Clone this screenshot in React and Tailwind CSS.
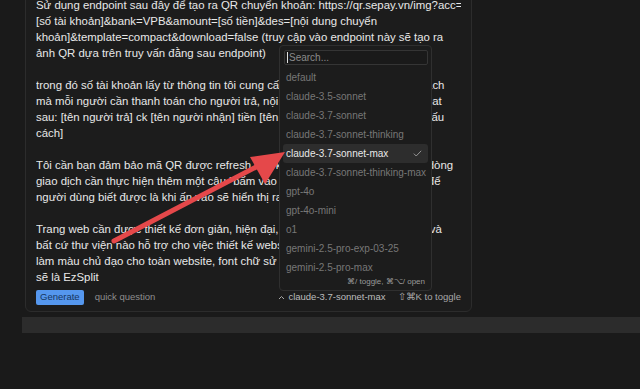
import React from "react";

const lines = [
  "Sử dụng endpoint sau đây để tạo ra QR chuyển khoản: https://qr.sepay.vn/img?acc=",
  "[số tài khoản]&bank=VPB&amount=[số tiền]&des=[nội dung chuyển",
  "khoản]&template=compact&download=false (truy cập vào endpoint này sẽ tạo ra",
  "ảnh QR dựa trên truy vấn đằng sau endpoint)",
  "",
  "trong đó số tài khoản lấy từ thông tin tôi cung cấp, số tiền là số tiền lấy theo cách",
  "mà mỗi người cần thanh toán cho người trả, nội dung chuyển khoản theo format",
  "sau: [tên người trả] ck [tên người nhận] tiền [tên hóa đơn - viết liền và không dấu",
  "cách]",
  "",
  "Tôi cần bạn đảm bảo mã QR được refresh mỗi khi người dùng nhấn vào một dòng",
  "giao dịch cần thực hiện thêm một câu \"bấm vào đây\" vào bên trong giao diện để",
  "người dùng biết được là khi ấn vào sẽ hiển thị ra mã QR",
  "",
  "Trang web cần được thiết kế đơn giản, hiện đại, có thể dùng Reactjs, tailwind và",
  "bất cứ thư viện nào hỗ trợ cho việc thiết kế website, sử dụng màu pastel",
  "làm màu chủ đạo cho toàn website, font chữ sử dụng Inter, tên trang web",
  "sẽ là EzSplit",
];

const models = [
  "default",
  "claude-3.5-sonnet",
  "claude-3.7-sonnet",
  "claude-3.7-sonnet-thinking",
  "claude-3.7-sonnet-max",
  "claude-3.7-sonnet-thinking-max",
  "gpt-4o",
  "gpt-4o-mini",
  "o1",
  "gemini-2.5-pro-exp-03-25",
  "gemini-2.5-pro-max",
];

export default function App() {
  return (
    <div
      className="relative w-[640px] h-[389px] overflow-hidden bg-[#1a1a1a]"
      style={{ fontFamily: "'Liberation Sans', Arial, sans-serif" }}
    >
      {/* Card */}
      <div className="ml-[25px] -mt-[10px] w-[447px] rounded-md border border-[#2c2c2c] bg-[#1c1c1c] px-[10px] pt-[6px] pb-[6px]">
        <div className="text-[11.4px] leading-[16px] text-[#e8e8e8]">
          {lines.map((l, i) => (
            <div key={i} className="h-[16px] whitespace-nowrap overflow-hidden">
              {l}
            </div>
          ))}
        </div>
        <div className="mt-[5px] flex h-[15px] items-center justify-between">
          <div className="flex items-center gap-[11px]">
            <div className="flex h-[15px] items-center rounded-[2px] bg-[#5597ee] px-[4px] text-[9.5px] text-[#16365f]">
              Generate
            </div>
            <div className="text-[9.5px] text-[#8e8e8e]">quick question</div>
          </div>
          <div className="flex items-center gap-[12px] text-[9.5px] text-[#a8a8a8]">
            <div className="flex items-center gap-[3px]">
              <svg width="7" height="5" viewBox="0 0 7 5" fill="none">
                <path d="M1 4 L3.5 1.5 L6 4" stroke="#a8a8a8" strokeWidth="1" />
              </svg>
              <span className="text-[#bdbdbd]">claude-3.7-sonnet-max</span>
            </div>
            <div>⇧⌘K to toggle</div>
          </div>
        </div>
      </div>

      {/* Bottom band */}
      <div className="ml-[22px] mt-[5px] h-[16px] bg-[#2c2c2c]" />

      {/* Dropdown */}
      <div className="absolute left-[279px] top-[45px] w-[153px] rounded-[4px] border border-[#2f2f2f] bg-[#1c1c1c] px-[3px] pt-[4px] pb-[2px]">
        <div className="ml-[1px] flex h-[15px] w-[144px] items-center rounded-[2px] border border-[#353535] bg-[#1a1a1a] pl-[2px] text-[10px] text-[#8a8a8a]">
          <span className="mr-[1px] inline-block h-[11px] w-[1px] bg-[#e0e0e0]" />
          Search...
        </div>
        <div className="mt-[2.5px]">
          {models.map((m) => {
            const sel = m === "claude-3.7-sonnet-max";
            return (
              <div
                key={m}
                className={
                  "flex h-[19px] items-center justify-between rounded-[3px] pl-[3px] pr-[6px] text-[10px] whitespace-nowrap " +
                  (sel ? "bg-[#2d2d2d] text-[#e8e8e8]" : "text-[#777777]")
                }
              >
                <span>{m}</span>
                {sel && (
                  <svg width="9" height="7" viewBox="0 0 9 7" fill="none">
                    <path d="M0.8 3.6 L3.2 6 L8.2 0.8" stroke="#a0a0a0" strokeWidth="0.9" />
                  </svg>
                )}
              </div>
            );
          })}
        </div>
        <div className="flex h-[11px] items-center justify-end pr-[3px] text-[8px] text-[#9a9a9a]">
          ⌘/ toggle, ⌘⌥/ open
        </div>
      </div>

      {/* Red arrow annotation */}
      <svg className="absolute left-0 top-0" width="640" height="389" viewBox="0 0 640 389">
        <line x1="114" y1="241" x2="258" y2="166" stroke="#e5484a" strokeWidth="5" strokeLinecap="round" />
        <polygon points="285,152 250,157 265,184" fill="#e5484a" />
      </svg>
    </div>
  );
}
